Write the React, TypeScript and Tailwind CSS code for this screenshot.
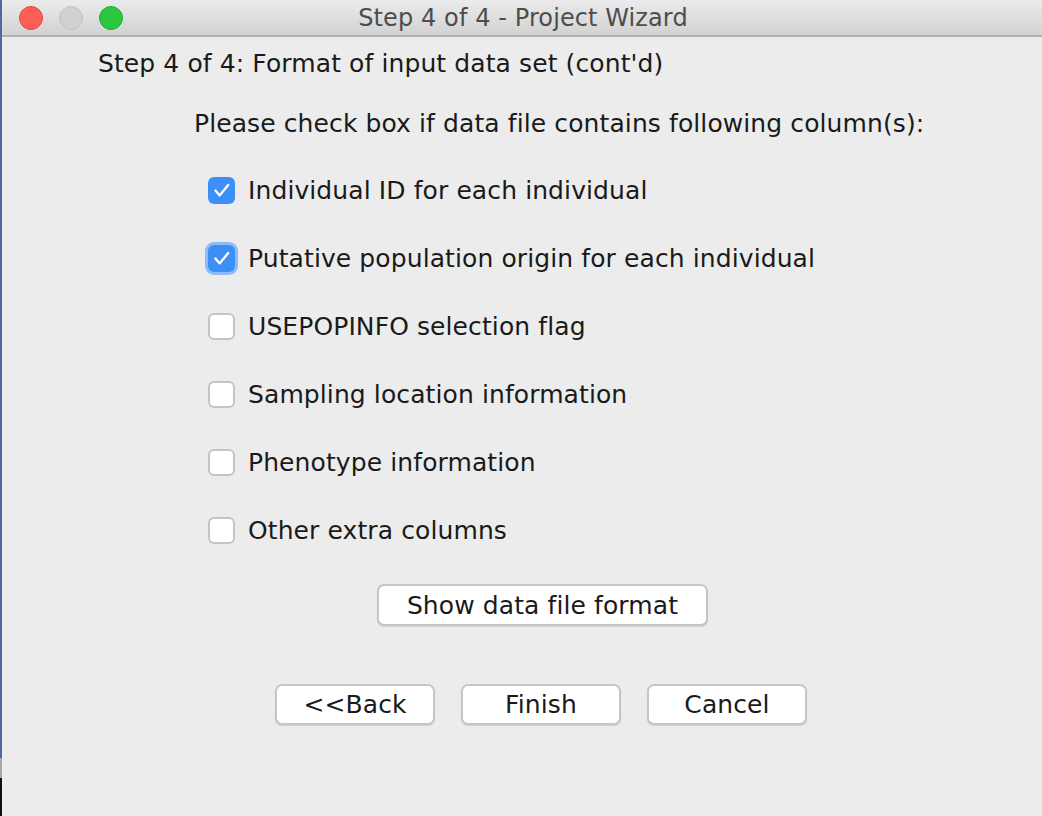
import React, { useState } from 'react';

const font = { fontFamily: '"DejaVu Sans", "Liberation Sans", sans-serif', letterSpacing: '0.1px' };

const options = [
  { id: 'ind', label: 'Individual ID for each individual', checked: true },
  { id: 'pop', label: 'Putative population origin for each individual', checked: true },
  { id: 'flag', label: 'USEPOPINFO selection flag', checked: false },
  { id: 'loc', label: 'Sampling location information', checked: false },
  { id: 'phen', label: 'Phenotype information', checked: false },
  { id: 'extra', label: 'Other extra columns', checked: false },
];

const Check = ({ checked, focused }: { checked: boolean; focused?: boolean }) => (
  <div
    className={`h-[27px] w-[27px] rounded-[6px] flex items-center justify-center shrink-0
      ${checked ? 'bg-[#3b8ff6]' : 'bg-white border-2 border-[#c4c4c4]'}
      ${focused ? 'ring-[3px] ring-[#8dbcf6]' : ''}`}
  >
    {checked && (
      <svg viewBox="0 0 27 27" className="h-[27px] w-[27px]">
        <path d="M7.5 13.5 L11.6 18.4 L20.2 8" fill="none" stroke="white" strokeWidth="2.3" strokeLinecap="round" strokeLinejoin="round" />
      </svg>
    )}
  </div>
);

const MacButton = ({ label, className }: { label: string; className: string }) => (
  <button
    className={`bg-white border-2 border-[#c6c6c6] rounded-[7px] text-[25px] text-[#1a1a1a] leading-none shadow-[0_1px_1px_rgba(0,0,0,0.12)] ${className}`}
  >
    {label}
  </button>
);

export default function App() {
  const [checks, setChecks] = useState(options.map((o) => o.checked));

  return (
    <div className="w-[1042px] h-[816px] flex bg-[#ececec] overflow-hidden" style={font}>
      {/* left desktop strip */}
      <div className="w-[2px] flex flex-col shrink-0">
        <div className="h-[758px] bg-[#4a6b9c]" />
        <div className="h-[20px] bg-[#a8a8a8]" />
        <div className="flex-1 bg-[#111]" />
      </div>

      <div className="flex-1 flex flex-col">
        {/* title bar */}
        <div className="h-[37px] shrink-0 bg-gradient-to-b from-[#ebebeb] to-[#d2d2d2] border-b-2 border-[#b1b1b1] flex items-center relative">
          <div className="flex items-center gap-[16px] pl-[17px]">
            <div className="h-[24px] w-[24px] rounded-full bg-[#fd5f57] border border-[#e2463f]" />
            <div className="h-[24px] w-[24px] rounded-full bg-[#d0d0d0] border border-[#c2c2c2]" />
            <div className="h-[24px] w-[24px] rounded-full bg-[#2ac73f] border border-[#1eab2f]" />
          </div>
          <div className="absolute inset-0 flex items-center justify-center text-[24px] text-[#4d4d4d] pl-[2px]">
            Step 4 of 4 - Project Wizard
          </div>
        </div>

        {/* body */}
        <div className="flex-1 flex flex-col text-[#1a1a1a] text-[25px]">
          <div className="pl-[96px] mt-[13px] leading-[28px]">Step 4 of 4: Format of input data set (cont'd)</div>
          <div className="pl-[192px] mt-[32px] leading-[28px]">
            Please check box if data file contains following column(s):
          </div>

          <div className="pl-[206px] mt-[39px] flex flex-col gap-[41px]">
            {options.map((o, i) => (
              <label
                key={o.id}
                className="flex items-center gap-[13px] h-[27px] cursor-default"
                onClick={() => setChecks(checks.map((c, j) => (j === i ? !c : c)))}
              >
                <Check checked={checks[i]} focused={i === 1} />
                <span className="leading-[28px]">{o.label}</span>
              </label>
            ))}
          </div>

          <div className="flex pl-[375px] mt-[40px]">
            <MacButton label="Show data file format" className="w-[331px] h-[42px]" />
          </div>

          <div className="flex pl-[273px] gap-[26px] mt-[58px]">
            <MacButton label="<<Back" className="w-[160px] h-[41px]" />
            <MacButton label="Finish" className="w-[160px] h-[41px]" />
            <MacButton label="Cancel" className="w-[160px] h-[41px]" />
          </div>
        </div>
      </div>
    </div>
  );
}
